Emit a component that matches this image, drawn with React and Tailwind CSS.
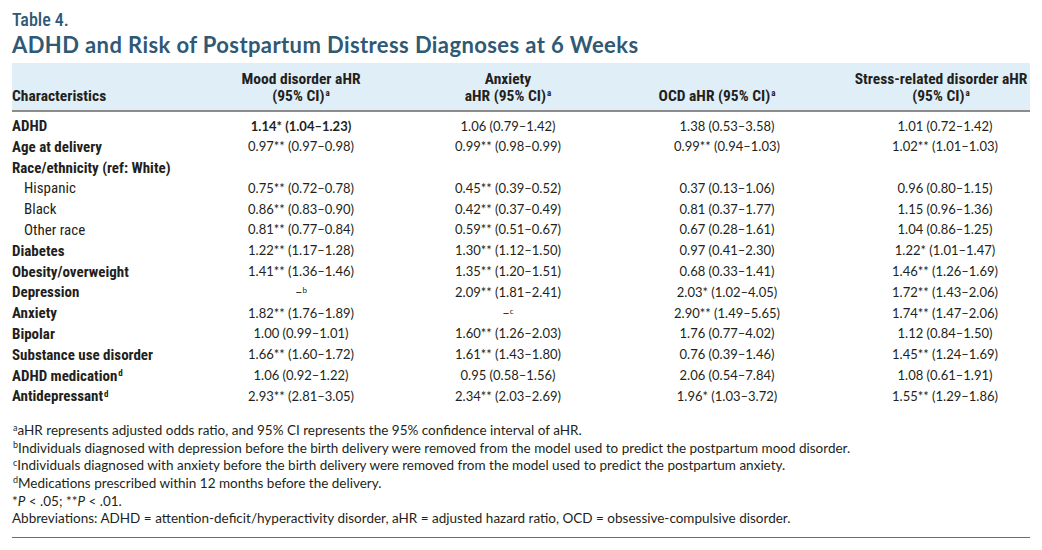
import React from 'react'

const cond = "font-['Roboto',sans-serif] font-stretch-condensed"
const body = "font-['Lato','Liberation_Sans',sans-serif]"
const cols = 'grid grid-cols-[188px_202px_212px_206px_210px]'

const rows = [
  { label: 'ADHD', v: [<b key="b">1.14* (1.04–1.23)</b>, '1.06 (0.79–1.42)', '1.38 (0.53–3.58)', '1.01 (0.72–1.42)'] },
  { label: 'Age at delivery', v: ['0.97** (0.97–0.98)', '0.99** (0.98–0.99)', '0.99** (0.94–1.03)', '1.02** (1.01–1.03)'] },
  { label: 'Race/ethnicity (ref: White)', v: ['', '', '', ''] },
  { label: 'Hispanic', sub: true, v: ['0.75** (0.72–0.78)', '0.45** (0.39–0.52)', '0.37 (0.13–1.06)', '0.96 (0.80–1.15)'] },
  { label: 'Black', sub: true, v: ['0.86** (0.83–0.90)', '0.42** (0.37–0.49)', '0.81 (0.37–1.77)', '1.15 (0.96–1.36)'] },
  { label: 'Other race', sub: true, v: ['0.81** (0.77–0.84)', '0.59** (0.51–0.67)', '0.67 (0.28–1.61)', '1.04 (0.86–1.25)'] },
  { label: 'Diabetes', v: ['1.22** (1.17–1.28)', '1.30** (1.12–1.50)', '0.97 (0.41–2.30)', '1.22* (1.01–1.47)'] },
  { label: 'Obesity/overweight', v: ['1.41** (1.36–1.46)', '1.35** (1.20–1.51)', '0.68 (0.33–1.41)', '1.46** (1.26–1.69)'] },
  { label: 'Depression', v: [<span key="d">–<sup className="text-[8px]">b</sup></span>, '2.09** (1.81–2.41)', '2.03* (1.02–4.05)', '1.72** (1.43–2.06)'] },
  { label: 'Anxiety', v: ['1.82** (1.76–1.89)', <span key="a">–<sup className="text-[8px]">c</sup></span>, '2.90** (1.49–5.65)', '1.74** (1.47–2.06)'] },
  { label: 'Bipolar', v: ['1.00 (0.99–1.01)', '1.60** (1.26–2.03)', '1.76 (0.77–4.02)', '1.12 (0.84–1.50)'] },
  { label: 'Substance use disorder', v: ['1.66** (1.60–1.72)', '1.61** (1.43–1.80)', '0.76 (0.39–1.46)', '1.45** (1.24–1.69)'] },
  { label: 'ADHD medication', sup: 'd', v: ['1.06 (0.92–1.22)', '0.95 (0.58–1.56)', '2.06 (0.54–7.84)', '1.08 (0.61–1.91)'] },
  { label: 'Antidepressant', sup: 'd', v: ['2.93** (2.81–3.05)', '2.34** (2.03–2.69)', '1.96* (1.03–3.72)', '1.55** (1.29–1.86)'] },
]

const Sup = ({ c }) => <sup className="text-[9px] ml-px">{c}</sup>

export default function App() {
  return (
    <div className="w-[1042px] h-[550px] bg-white px-3 pt-[9px] text-[#231f20]">
      <div className={`${cond} font-medium text-[18px] leading-[22px] text-[#2f5975]`}>Table 4.</div>
      <h1 className={`${body} font-bold text-[22px] tracking-[0.4px] leading-[28px] text-[#2f5975]`}>
        ADHD and Risk of Postpartum Distress Diagnoses at 6 Weeks
      </h1>
      <div className={`${cols} ${cond} font-bold text-[15.5px] leading-[16.5px] whitespace-nowrap mt-[4px] h-[49px] items-end pb-[6px] bg-[#e0eff7] border-b-2 border-[#8c8c8c]`}>
        <div>Characteristics</div>
        <div className="text-center">Mood disorder aHR<br />(95% CI)<Sup c="a" /></div>
        <div className="text-center">Anxiety<br />aHR (95% CI)<Sup c="a" /></div>
        <div className="text-center">OCD aHR (95% CI)<Sup c="a" /></div>
        <div className="text-center pl-8">Stress-related disorder aHR<br />(95% CI)<Sup c="a" /></div>
      </div>
      <div className="pt-[3px]">
        {rows.map((r) => (
          <div key={r.label} className={`${cols} h-[20.8px] items-center`}>
            <div className={`${cond} text-[15px] whitespace-nowrap ${r.sub ? 'pl-3 font-normal' : 'font-bold'}`}>
              {r.label}
              {r.sup && <Sup c={r.sup} />}
            </div>
            <div className={`${body} text-[13px] text-center`}>{r.v[0]}</div>
            <div className={`${body} text-[13px] text-center`}>{r.v[1]}</div>
            <div className={`${body} text-[13px] text-center pl-5`}>{r.v[2]}</div>
            <div className={`${body} text-[13px] text-center pl-10`}>{r.v[3]}</div>
          </div>
        ))}
      </div>
      <div className={`${body} text-[13.5px] leading-[17.6px] mt-[16px] pb-[9px] w-[1018px] border-b border-[#5a7286]`}>
        <p><Sup c="a" />aHR represents adjusted odds ratio, and 95% CI represents the 95% confidence interval of aHR.</p>
        <p><Sup c="b" />Individuals diagnosed with depression before the birth delivery were removed from the model used to predict the postpartum mood disorder.</p>
        <p><Sup c="c" />Individuals diagnosed with anxiety before the birth delivery were removed from the model used to predict the postpartum anxiety.</p>
        <p><Sup c="d" />Medications prescribed within 12 months before the delivery.</p>
        <p>*<i>P</i> &lt; .05; **<i>P</i> &lt; .01.</p>
        <p>Abbreviations: ADHD = attention-deficit/hyperactivity disorder, aHR = adjusted hazard ratio, OCD = obsessive-compulsive disorder.</p>
      </div>
    </div>
  )
}
